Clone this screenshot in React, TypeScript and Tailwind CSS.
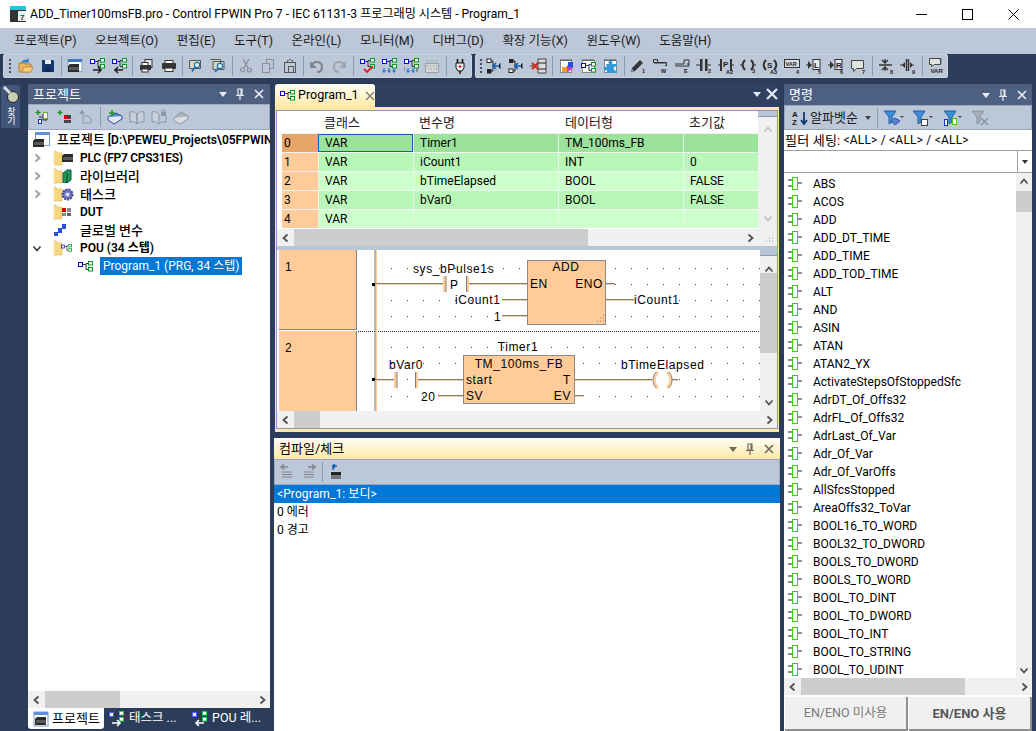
import React from "react";

const FONT = "[font-family:Roboto,'Noto_Sans_CJK_KR',sans-serif]";

type P = { children: React.ReactNode; w?: number; h?: number; vb?: string; className?: string };
const S = ({ children, w = 16, h = 16, vb, className = "" }: P) => (
  <svg width={w} height={h} viewBox={vb ?? `0 0 ${w} ${h}`} className={"shrink-0 " + className} fill="none">
    {children}
  </svg>
);

const Pou = ({ d = 0, dy = 0, c1 = "#0000e0", c2 = "#009a20" }: { d?: number; dy?: number; c1?: string; c2?: string }) => (
  <g transform={`translate(${d} ${dy})`}>
    <rect x="0.5" y="1.5" width="4" height="4" fill="#fff" stroke={c1} />
    <path d="M5 3.5h3M8 2.5v6h2M8 2.5h2" stroke="#333" />
    <rect x="10.5" y="0.5" width="4" height="3.5" fill="#fff" stroke={c2} />
    <rect x="10.5" y="6.5" width="4" height="3.5" fill="#fff" stroke={c2} />
  </g>
);
const Plc = ({ x = 0, y = 0 }: { x?: number; y?: number }) => (
  <g transform={`translate(${x} ${y})`}>
    <path d="M1 3l2-2h9v8H1z" fill="#2b2b2b" />
    <path d="M3 4v3M5 4v3M7 4v3M9 4v3M11 4v3" stroke="#888" />
  </g>
);
const Arrow = ({ dir, x = 2, y = 11, c = "#222" }: { dir: 1 | -1; x?: number; y?: number; c?: string }) => (
  <path
    d={dir > 0 ? `M${x} ${y}h8M${x + 5} ${y - 3}l3 3-3 3` : `M${x + 9} ${y}h-8M${x + 4} ${y - 3}l-3 3 3 3`}
    stroke={c}
    strokeWidth="1.6"
  />
);
const T = ({ x, y, s, c = "#222", z = 5.5 }: { x: number; y: number; s: string; c?: string; z?: number }) => (
  <text x={x} y={y} fontSize={z} fontWeight={700} fontFamily="Liberation Sans" fill={c}>
    {s}
  </text>
);
const Folder = () => (
  <S w={10} h={16}>
    <path d="M1 1h2l1 2h5v12H1z" fill="#f7d77f" stroke="#e0b850" strokeWidth="0.6" />
    <path d="M1 1v14" stroke="#fff3c4" />
  </S>
);
const FbIcon = () => (
  <S>
    <rect x="5.5" y="1.5" width="5" height="12" fill="#fff" stroke="#3ecb10" />
    <path d="M1 4h4M1 10h4M11 7h4" stroke="#222" />
  </S>
);

const I: Record<string, React.ReactNode> = {
  open: <S><path d="M1 5h5l1 1h6v8H1z" fill="#e9b45d" stroke="#b87f2a" /><path d="M4 14l2-5h9l-2 5z" fill="#f8cf7d" stroke="#c4913f" /><path d="M4 5c1-3 4-3 6-2M10 0.5v3.5H6.5" stroke="#2a7fc0" strokeWidth="1.4" /></S>,
  save: <S><path d="M2 2h11l1 1v11H2z" fill="#12396f" /><rect x="5" y="2" width="6" height="4" fill="#e8edf5" /><rect x="5" y="9" width="6" height="5" fill="#0d2a55" /></S>,
  win: <S><rect x="1" y="1.5" width="14" height="12" fill="#fff" stroke="#8aa0c0" /><rect x="1" y="1" width="14" height="3" fill="#3f78c8" /><Plc x={0} y={5} /></S>,
  pouR: <S><Pou d={1} /><Arrow dir={1} x={4} y={12} /></S>,
  pouL: <S><Pou d={1} /><Arrow dir={-1} x={3} y={12} /></S>,
  print2: <S><rect x="6" y="1.5" width="7" height="8" fill="#e4e4e4" stroke="#333" /><rect x="1" y="7" width="11" height="5" fill="#333" /><rect x="3" y="4.5" width="6" height="3" fill="#fff" stroke="#333" /><rect x="3" y="11" width="6" height="3" fill="#fff" stroke="#333" /></S>,
  print: <S><rect x="4" y="2.5" width="8" height="3" fill="#fff" stroke="#333" /><rect x="1" y="5" width="14" height="6" rx="1" fill="#333" /><rect x="4" y="10" width="8" height="3.5" fill="#fff" stroke="#333" /></S>,
  find: <S><path d="M1.5 2.5h11v8h-6l-2 3v-3h-3z" fill="#d3d7c5" stroke="#555" /><circle cx="9" cy="7" r="2.6" fill="#dff" stroke="#1c70b0" strokeWidth="1.2" /><path d="M7 9l-3 4" stroke="#1c70b0" strokeWidth="1.4" /></S>,
  find2: <S><path d="M0.5 1.5h10v7h-2M3 3.5h11v8H8l-2 2v-2H3z" fill="#d3d7c5" stroke="#555" /><circle cx="10" cy="8" r="2.6" fill="#dff" stroke="#1c70b0" strokeWidth="1.2" /><path d="M8 10l-3 4" stroke="#1c70b0" strokeWidth="1.4" /></S>,
  cut: <S><path d="M5 1l5 9M11 1l-5 9" stroke="#8a8f98" strokeWidth="1.3" /><circle cx="4.5" cy="12" r="2" stroke="#8a8f98" strokeWidth="1.2" /><circle cx="11.5" cy="12" r="2" stroke="#8a8f98" strokeWidth="1.2" /></S>,
  copy: <S><rect x="6.5" y="1.5" width="7" height="9" stroke="#8a8f98" /><rect x="2.5" y="5.5" width="7" height="9" fill="#bcc7d8" stroke="#8a8f98" /></S>,
  paste: <S><rect x="2.5" y="4.5" width="11" height="10" stroke="#555" /><path d="M5.5 4.5v-2h1l1-1h1l1 1h1v2z" fill="#bcc7d8" stroke="#555" /><rect x="6.5" y="8.5" width="5" height="6" fill="#bcc7d8" stroke="#555" /></S>,
  undo: <S><path d="M3 8c1-6 10-5 10 1 0 3-2 5-5 5" stroke="#808690" strokeWidth="2" /><path d="M1 3v7h7z" fill="#808690" /></S>,
  redo: <S><path d="M13 8C12 2 3 3 3 9c0 3 2 5 5 5" stroke="#a0a6b0" strokeWidth="2" /><path d="M15 3v7H8z" fill="#a0a6b0" /></S>,
  pouChk: <S><Pou d={1} /><path d="M5 11l3 3 6-6" stroke="#d82020" strokeWidth="1.8" /></S>,
  pouDn: <S><Pou d={1} /><path d="M3 10v4M1.5 12.5L3 14.5l1.5-2M8 10v4M6.5 12.5L8 14.5l1.5-2M13 10v4M11.5 12.5l1.5 2 1.5-2" stroke="#1060c0" /></S>,
  pouDots: <S><Pou d={1} /><path d="M5 10v4M3.5 12.5L5 14.5l1.5-2M10 10v4M8.5 12.5l1.5 2 1.5-2" stroke="#1060c0" /><path d="M1 10h1M1 12h1M13 11h2M13 13h2" stroke="#555" /></S>,
  grayDots: <S><rect x="1.5" y="5.5" width="13" height="9" fill="#d4d8dc" stroke="#98a0a8" /><path d="M3 3h1M6 3h1M9 3h1M12 3h1M3 8h1M6 8h1M9 8h1M12 8h1M4 11h1M7 11h1M10 11h1M12 11h1" stroke="#777" /></S>,
  plug: <S><path d="M5.5 1v4M10.5 1v4" stroke="#111" strokeWidth="1.6" /><path d="M4 5h8v5l-2 3H6l-2-3z" fill="#eee" stroke="#111" /><path d="M8 13v3" stroke="#111" strokeWidth="1.4" /><path d="M6.5 8.5h3M8 7v3" stroke="#d02020" strokeWidth="1.2" /></S>,
  inL: <S><rect x="1" y="1" width="4" height="3.5" fill="#fff" stroke="#222" /><rect x="1" y="11" width="4.5" height="4.5" fill="#222" /><path d="M5 3h2v10H5" stroke="#222" /><Arrow dir={-1} x={6} y={8} c="#1060b0" /><path d="M15 6h-1.5v4H15" stroke="#222" /></S>,
  inL2: <S><rect x="1" y="1" width="4.5" height="4" fill="#222" /><rect x="1" y="11" width="4" height="3.5" fill="#fff" stroke="#222" /><path d="M5 3h2v10H5" stroke="#222" /><Arrow dir={-1} x={6} y={8} c="#1060b0" /><path d="M15 6h-1.5v4H15" stroke="#222" /></S>,
  xBox: <S w={18}><path d="M1 8h4M9 1h8v14H9z" fill="#ddd" stroke="#444" /><path d="M9 5h8M9 11h8" stroke="#222" /><path d="M3 5l6 6M9 5l-6 6" stroke="#d02a1a" strokeWidth="2" /></S>,
  note: <S><rect x="2.5" y="2.5" width="11" height="12" fill="#fff" stroke="#888" /><path d="M3 1v2M5 1v2M7 1v2M9 1v2M11 1v2M13 1v2" stroke="#555" /><path d="M4 13l6-6 5-3v6l-5 4z" fill="#c03ad0" /><path d="M4 9h5v5H4z" fill="#f0a020" /><path d="M10 4h5v5h-5z" fill="#2050e0" /></S>,
  notePou: <S><rect x="2.5" y="2.5" width="12" height="12" fill="#fff" stroke="#888" /><path d="M3 1v2M5 1v2M7 1v2M9 1v2M11 1v2M13 1v2" stroke="#555" /><Pou d={1} dy={4} /></S>,
  puzzle: <S><rect x="2.5" y="2.5" width="12" height="12" fill="#fff" stroke="#888" /><path d="M3 1v2M5 1v2M7 1v2M9 1v2M11 1v2M13 1v2" stroke="#555" /><path d="M4 6h3a2 2 0 1 1 3 0h5v3a2 2 0 1 0 0 3v3H5v-3a2 2 0 1 1 0-3z" fill="#3398d8" /></S>,
  pencil: <S><path d="M1 14l1-4 8-8 3 3-8 8z" fill="#333" /><path d="M1 14l1-3 2 2z" fill="#999" /><T x={12} y={15} s="1" /></S>,
  wireW: <S><path d="M1.5 1.5h4v3h9v3h-1.5M1.5 1.5v3h4" stroke="#333" /><path d="M2 5h12" stroke="#333" /><T x={9} y={15} s="W" /></S>,
  wireE: <S><path d="M1 6h9V2h5v4h-2" stroke="#333" /><path d="M1 8h14v-2" stroke="#333" /><T x={10} y={15} s="E" /></S>,
  c2: <S><path d="M0 7h4M11 7h4" stroke="#333" /><rect x="4" y="1" width="2.5" height="12" fill="#333" /><rect x="9" y="1" width="2.5" height="12" fill="#333" /><T x={12} y={15} s="2" /></S>,
  cP: <S><path d="M0 7h3M13 7h3" stroke="#333" /><rect x="2" y="1" width="2" height="12" fill="#333" /><rect x="12" y="1" width="2" height="12" fill="#333" /><T x={5} y={9} s="P" z={8} /><T x={8} y={16} s="A2" /></S>,
  co3: <S><path d="M5 2C2 5 2 9 5 12M11 2c3 3 3 7 0 10" stroke="#333" strokeWidth="2.2" /><path d="M0 7h2M14 7h2" stroke="#333" /><T x={12} y={15} s="3" /></S>,
  coS: <S><path d="M4 2C1 5 1 9 4 12M12 2c3 3 3 7 0 10" stroke="#333" strokeWidth="2.2" /><T x={5} y={10} s="S" z={8} /><T x={8} y={16} s="A3" /></S>,
  var: <S><rect x="0.5" y="1.5" width="15" height="8" fill="#d8dde5" stroke="#333" /><T x={1.5} y={8} s="VAR" z={5.5} /><T x={12} y={15.5} s="4" /></S>,
  L: <S><path d="M0 7h3" stroke="#333" /><path d="M2 3l4 4-4 4z" fill="#333" /><rect x="7" y="1.5" width="7" height="10" fill="#e5e8ed" stroke="#333" /><T x={8} y={10} s="L" z={8} /><T x={12} y={16} s="5" /></S>,
  R: <S><path d="M0 7h3" stroke="#333" /><path d="M2 3l4 4-4 4z" fill="#333" /><rect x="7" y="1.5" width="7" height="10" fill="#e5e8ed" stroke="#333" /><T x={8} y={10} s="R" z={8} /><T x={12} y={16} s="6" /></S>,
  cmt: <S><path d="M1.5 2.5h12v8h-7l-3 3v-3h-2z" fill="#dfe4dc" stroke="#444" /><T x={12} y={15.5} s="7" /></S>,
  n8: <S><path d="M1 7h13" stroke="#333" strokeWidth="1.5" /><path d="M7 1v3M4 2l3 3 3-3M4 12l3-3 3 3M7 10v3" stroke="#333" strokeWidth="1.4" /><T x={12} y={15.5} s="8" /></S>,
  n9: <S><path d="M0 7h3M13 7h1" stroke="#333" /><path d="M2 7l3-3v6zM13 7l-3-3v6z" fill="#333" /><path d="M6.5 1v12M8.5 1v12" stroke="#333" strokeWidth="1.4" /><T x={12} y={15.5} s="9" /></S>,
  cmtVar: <S><path d="M1.5 0.5h11v6h-6l-3 2v-2h-2z" fill="#dfe4dc" stroke="#444" /><path d="M11 1h4M13 3h2M13 5h2" stroke="#777" strokeDasharray="1 1" /><T x={2.5} y={15} s="VAR" z={6} /></S>,
};

const Grip = () => (
  <div className="flex flex-col gap-[2px] w-[2px] mx-[1px]">
    {[0, 1, 2, 3].map((i) => (
      <div key={i} className="w-[2px] h-[2px] bg-[#3f4f6a]" />
    ))}
  </div>
);
const Sep = () => (
  <div className="w-[6px] h-[20px] flex justify-center">
    <div className="w-[1px] h-full bg-[#8d99ad]" />
  </div>
);
const Slot = ({ children }: { children: React.ReactNode }) => (
  <div className="w-[22px] h-[20px] flex items-center justify-center">{children}</div>
);
const Bar = ({ items }: { items: string[] }) => (
  <>
    {items.map((k, i) => (k === "|" ? <Sep key={i} /> : <Slot key={i}>{I[k]}</Slot>))}
  </>
);

const Chev = ({ dir, c = "#505050" }: { dir: "l" | "r" | "u" | "d"; c?: string }) => {
  const d = { l: "M6.5 1.5L2.5 5l4 3.5", r: "M3.5 1.5L7.5 5l-4 3.5", u: "M1.5 6.5L5 2.5l3.5 4", d: "M1.5 3.5L5 7.5l3.5-4" }[dir];
  return (
    <S w={10} h={10}>
      <path d={d} stroke={c} strokeWidth="1.8" />
    </S>
  );
};

const HBar = ({ thumb, className = "" }: { thumb: string; className?: string }) => (
  <div className={"h-[17px] bg-[#f0f0f0] flex items-center shrink-0 " + className}>
    <div className="w-[17px] flex justify-center"><Chev dir="l" /></div>
    <div className="flex-1 h-full">
      <div className={"h-full bg-[#cdcdcd] " + thumb} />
    </div>
    <div className="w-[17px] flex justify-center"><Chev dir="r" /></div>
  </div>
);

const TitleIcons = ({ c = "#e6ebf2" }: { c?: string }) => (
  <div className="ml-auto flex items-center gap-[7px]">
    <S w={10} h={10}><path d="M1 3h8L5 8z" fill={c} /></S>
    <S w={10} h={12}><path d="M3 1h4v6H3zM1 7.5h8M5 8v4" stroke={c} strokeWidth="1.2" /><path d="M5.5 1h1.5v6H5.5z" fill={c} /></S>
    <S w={12} h={12} className="ml-[1px]"><path d="M2 2l8 8M10 2l-8 8" stroke={c} strokeWidth="1.7" /></S>
  </div>
);

const menu = ["프로젝트(P)", "오브젝트(O)", "편집(E)", "도구(T)", "온라인(L)", "모니터(M)", "디버그(D)", "확장 기능(X)", "윈도우(W)", "도움말(H)"];

const Row = ({ chev, icon, label, cls = "" }: { chev?: "r" | "d"; icon: React.ReactNode; label: string; cls?: string }) => (
  <div className="h-[18px] flex items-center font-semibold text-black whitespace-nowrap">
    <div className="w-[25px] pl-[4px] flex justify-start">
      {chev && <Chev dir={chev} c={chev === "r" ? "#9a9a9a" : "#444"} />}
    </div>
    <div className="w-[27px] flex items-center">{icon}</div>
    <span className={cls}>{label}</span>
  </div>
);

const overlayFolder = (child: React.ReactNode) => (
  <div className="flex items-center">
    <Folder />
    <div className="-ml-[2px] flex items-center">{child}</div>
  </div>
);

const vars = [
  ["0", "VAR", "Timer1", "TM_100ms_FB", ""],
  ["1", "VAR", "iCount1", "INT", "0"],
  ["2", "VAR", "bTimeElapsed", "BOOL", "FALSE"],
  ["3", "VAR", "bVar0", "BOOL", "FALSE"],
  ["4", "VAR", "", "", ""],
];
const rowBg = ["bg-[#9be29b]", "bg-[#b9f7b9]", "bg-[#ccffcc]", "bg-[#b9f7b9]", "bg-[#ccffcc]"];
const cmds = "ABS ACOS ADD ADD_DT_TIME ADD_TIME ADD_TOD_TIME ALT AND ASIN ATAN ATAN2_YX ActivateStepsOfStoppedSfc AdrDT_Of_Offs32 AdrFL_Of_Offs32 AdrLast_Of_Var Adr_Of_Var Adr_Of_VarOffs AllSfcsStopped AreaOffs32_ToVar BOOL16_TO_WORD BOOL32_TO_DWORD BOOLS_TO_DWORD BOOLS_TO_WORD BOOL_TO_DINT BOOL_TO_DWORD BOOL_TO_INT BOOL_TO_STRING BOOL_TO_UDINT".split(" ");

const Lbl = ({ x, y, s, right, center }: { x: number; y: number; s: string; right?: boolean; center?: boolean }) => (
  <div
    className="absolute text-[12px] leading-none text-black whitespace-nowrap tracking-[0.6px] [font-family:'Liberation_Sans',sans-serif]"
    style={{
      left: x - 277,
      top: y - 250,
      transform: `translate(${right ? "-100%" : center ? "-50%" : "0"}, -50%)`,
    }}
  >
    {s}
  </div>
);

const Wire = ({ d }: { d: string }) => (
  <>
    <path d={d} stroke="#ffcc99" strokeWidth="1" transform="translate(0 0.5)" />
    <path d={d} stroke="#7d7d7d" strokeWidth="1" transform="translate(0 -0.5)" />
  </>
);
const Contact = ({ x1, x2, y }: { x1: number; x2: number; y: number }) => (
  <>
    <rect x={x1} y={y - 8} width="3" height="16" fill="#ffcc99" />
    <rect x={x1 + 2.5} y={y - 8} width="1" height="16" fill="#7d7d7d" />
    <rect x={x2} y={y - 8} width="3" height="16" fill="#ffcc99" />
    <rect x={x2} y={y - 8} width="1" height="16" fill="#7d7d7d" />
  </>
);

function Ladder() {
  const xs: number[] = [];
  for (let x = 391; x < 760; x += 16) xs.push(x);
  const ys = [268, 284, 300, 316, 347, 363, 379, 396];
  return (
    <div className="relative h-[161px] bg-white overflow-hidden">
      <div className="flex flex-col h-full pl-[2px]">
        <div className="h-[80px] flex">
          <div className="w-[78px] h-[80px] bg-[#ffcc99] border-r border-b border-[#808080] pl-[6px] pt-[11px] text-[12px] text-black [font-family:'Liberation_Sans',sans-serif]">1</div>
        </div>
        <div className="h-[81px] flex">
          <div className="w-[78px] h-[81px] mt-[1px] bg-[#ffcc99] border-r border-[#808080] pl-[6px] pt-[11px] text-[12px] text-black [font-family:'Liberation_Sans',sans-serif]">2</div>
        </div>
      </div>
      <svg className="absolute left-0 top-0" width="483" height="161" viewBox="277 250 483 161" fill="none">
        {ys.flatMap((y) => xs.map((x) => <rect key={x + "-" + y} x={x} y={y} width="1" height="1" fill="#444" />))}
        <path d="M358 331.5H760" stroke="#222" strokeDasharray="1 1" />
        <rect x="375.5" y="250" width="1.5" height="161" fill="#ffcc99" />
        <rect x="374.5" y="250" width="1" height="161" fill="#7d7d7d" />
        <rect x="372" y="283" width="3" height="3" fill="#000" />
        <rect x="372" y="378" width="3" height="3" fill="#000" />
        <Wire d="M375 284H445M467 284H527M502 300H527M502 316H527M606 284H615M606 300H634" />
        <Contact x1={443} x2={466} y={284} />
        <rect x="527.5" y="260.5" width="78" height="64" fill="#ffcc99" stroke="#8a8a8a" />
        <path d="M600 321h1M597 321h1M603 321h1M600 318h1M603 318h1M603 315h1" stroke="#a08060" />
        <Wire d="M375 380H395M418 380H463M438 396H463M575 380H652M672 380H678M575 396H584" />
        <Contact x1={394} x2={415} y={380} />
        <rect x="463.5" y="355.5" width="111" height="48" fill="#ffcc99" stroke="#8a8a8a" />
        <rect x="652" y="371" width="20" height="18" fill="#fff" />
        <path d="M658 372c-5 4-5 12 0 16M667 372c5 4 5 12 0 16" stroke="#ffcc99" strokeWidth="3" />
        <path d="M656 372c-4 4-4 12 0 16M669 372c4 4 4 12 0 16" stroke="#8a8a8a" />
      </svg>
      <Lbl x={413} y={269} s="sys_bPulse1s" />
      <Lbl x={450} y={285} s="P" />
      <Lbl x={566} y={267} s="ADD" center />
      <Lbl x={530} y={284} s="EN" />
      <Lbl x={603} y={284} s="ENO" right />
      <Lbl x={455} y={300} s="iCount1" />
      <Lbl x={494} y={317} s="1" />
      <Lbl x={634} y={300} s="iCount1" />
      <Lbl x={518} y={347} s="Timer1" center />
      <Lbl x={519} y={364} s="TM_100ms_FB" center />
      <Lbl x={389} y={365} s="bVar0" />
      <Lbl x={621} y={365} s="bTimeElapsed" />
      <Lbl x={466} y={380} s="start" />
      <Lbl x={571} y={380} s="T" right />
      <Lbl x={466} y={396} s="SV" />
      <Lbl x={571} y={396} s="EV" right />
      <Lbl x={421} y={397} s="20" />
    </div>
  );
}

export default function App() {
  return (
    <div className={"w-[1036px] h-[731px] overflow-hidden flex flex-col bg-[#2c3d5b] text-[12px] leading-none " + FONT}>
      {/* title */}
      <div className="h-[28px] shrink-0 bg-white flex items-center pl-[9px] text-black text-[12.1px]">
        <S w={18} h={18} className="mr-[3px]">
          <rect x="1" y="1" width="16" height="4" fill="#25c4d8" />
          <rect x="1" y="5" width="16" height="12" fill="#333" />
          <rect x="9" y="6" width="8" height="10" fill="#eee" />
          <T x={11} y={14.5} s="7" c="#333" z={8} />
        </S>
        <span>ADD_Timer100msFB.pro - Control FPWIN Pro 7 - IEC 61131-3 프로그래밍 시스템 - Program_1</span>
        <div className="ml-auto flex items-center">
          <div className="w-[46px] flex justify-center"><S w={11} h={11}><path d="M0 5.5h11" stroke="#000" /></S></div>
          <div className="w-[46px] flex justify-center"><S w={11} h={11}><rect x="0.5" y="0.5" width="10" height="10" stroke="#000" /></S></div>
          <div className="w-[46px] flex justify-center"><S w={11} h={11}><path d="M0.5 0.5l10 10M10.5 0.5l-10 10" stroke="#000" /></S></div>
        </div>
      </div>
      {/* menu */}
      <div className="h-[26px] shrink-0 bg-[#bcc7d8] flex items-center pl-[14px] gap-[18.5px] text-[#1b1b1b] text-[12.5px]">
        {menu.map((m) => <span key={m} className="whitespace-nowrap">{m}</span>)}
      </div>
      {/* toolbars */}
      <div className="h-[24px] shrink-0 flex pl-[3px] gap-[3px]">
        <div className="w-[469px] h-[24px] bg-[#bcc7d8] rounded-[2px] border border-[#cbd4e1] flex items-center pl-[4px]">
          <Grip />
          <div className="w-[3px]" />
          <Bar items={["open", "save", "|", "win", "pouR", "pouL", "|", "print2", "print", "|", "find", "find2", "|", "cut", "copy", "paste", "|", "undo", "redo", "|", "pouChk", "pouDn", "pouDots", "grayDots", "|", "plug"]} />
        </div>
        <div className="w-[473px] h-[24px] bg-[#bcc7d8] rounded-[2px] border border-[#cbd4e1] flex items-center pl-[3px]">
          <Grip />
          <Bar items={["inL", "inL2", "xBox", "|", "note", "notePou", "puzzle", "|", "pencil", "wireW", "wireE", "c2", "cP", "co3", "coS", "var", "L", "R", "cmt", "|", "n8", "n9", "|", "cmtVar"]} />
        </div>
      </div>

      {/* body */}
      <div className="flex-1 flex pt-[6px] min-h-0">
        {/* left strip */}
        <div className="w-[28px] shrink-0 pl-[1px] pt-[1px]">
          <div className="w-[19px] h-[43px] bg-[#42557a] rounded-[2px] flex flex-col items-center pt-[1px]">
            <S w={18} h={18}>
              <circle cx="11" cy="11" r="5.5" fill="#c8cdb4" stroke="#222" />
              <path d="M2 1l6 6" stroke="#ddd" strokeWidth="3" />
            </S>
            <span className="text-[9px] text-white [writing-mode:vertical-rl] mt-[3px]">찾기</span>
          </div>
        </div>

        {/* project panel */}
        <div className="w-[242px] shrink-0 flex flex-col">
          <div className="h-[20px] shrink-0 bg-[#4d6082] rounded-t-[2px] flex items-center px-[5px] text-white">
            <span className="text-[13px]">프로젝트</span>
            <TitleIcons />
          </div>
          <div className="h-[26px] shrink-0 bg-[#bcc7d8] border border-[#9aa8bd] flex items-center pl-[3px]">
            <Slot><S><path d="M3 1v5M0.5 3.5h5" stroke="#1a9a20" strokeWidth="1.6" /><path d="M4 8h3M8 5h4v6H8z" stroke="#222" /><rect x="8.5" y="3.5" width="4" height="6" fill="#fff" stroke="#3ecb10" /><rect x="3.5" y="10.5" width="3" height="4" fill="#fff" stroke="#1030d0" /></S></Slot>
            <Slot><S><path d="M3 1v5M0.5 3.5h5" stroke="#1a9a20" strokeWidth="1.6" /><rect x="7" y="6" width="4" height="4" fill="#c00" /><rect x="11" y="6" width="3" height="4" fill="#444" /><rect x="7" y="11" width="4" height="3" fill="#444" /><rect x="11" y="11" width="3" height="3" fill="#444" /></S></Slot>
            <Slot><S><path d="M3 1v5M0.5 3.5h5" stroke="#8a95a5" strokeWidth="1.6" /><path d="M4 7h5l3 3v4H4z" stroke="#8a95a5" /></S></Slot>
            <div className="w-[3px] h-[20px] border-r border-[#8d99ad] mr-[3px]" />
            <Slot><S><path d="M1 8l8-4 6 3-8 5z" fill="#5a84d8" stroke="#2a50a0" /><path d="M1 8v3l6 4 8-5V7" stroke="#2a50a0" fill="#dfe7f5" /><path d="M5 1v6M2 4h6" stroke="#1a9a20" strokeWidth="1.6" /></S></Slot>
            <Slot><S><path d="M1 3c3-1 5 0 7 2v10c-2-2-4-3-7-2zM15 3c-3-1-5 0-7 2v10c2-2 4-3 7-2z" fill="#c8d0da" stroke="#8a95a5" /></S></Slot>
            <Slot><S><path d="M1 3c3-1 5 0 7 2v10c-2-2-4-3-7-2zM15 7v6c-3-1-5 0-7 2" fill="#c8d0da" stroke="#8a95a5" /><rect x="10" y="3" width="5" height="4" fill="#8a95a5" /><path d="M11 3V1h3v2" stroke="#8a95a5" /></S></Slot>
            <Slot><S><path d="M1 9l7-6 7 4-8 6z" fill="#a8b0ba" stroke="#8a95a5" /><path d="M1 9v3l6 3 8-5V7" fill="#d8dde3" stroke="#8a95a5" /></S></Slot>
          </div>
          <div className="flex-1 min-h-0 bg-white overflow-hidden">
            <div className="h-[19px] flex items-center font-semibold text-black whitespace-nowrap pl-[4px]">
              <S w={18} h={16} className="mr-[7px]"><rect x="3.5" y="0.5" width="14" height="13" fill="#fff" stroke="#7d98c4" /><rect x="3" y="0" width="15" height="3" fill="#5f8fd8" /><Plc x={0} y={6} /></S>
              <span><span className="text-[13px] font-medium">프로젝트</span> [D:\PEWEU_Projects\05FPWIN</span>
            </div>
            <Row chev="r" icon={overlayFolder(<S w={14} h={11}><Plc /></S>)} label="PLC (FP7 CPS31ES)" cls="tracking-[-0.3px]" />
            <Row chev="r" icon={overlayFolder(<S w={12} h={14}><path d="M2 4l4-3h4v10l-4 3H2z" fill="#1c9c50" stroke="#1a5060" /><path d="M6 4v10" stroke="#234" /></S>)} label="라이브러리" cls="text-[13px] font-medium" />
            <Row chev="r" icon={overlayFolder(<S w={13} h={13}><circle cx="6.5" cy="6.5" r="5" fill="#6a78c8" stroke="#4a4a90" strokeWidth="2" strokeDasharray="2 1" /><circle cx="6.5" cy="6.5" r="2" fill="#dde" /></S>)} label="태스크" cls="text-[13px] font-medium" />
            <Row icon={overlayFolder(<S w={11} h={10}><rect x="1" y="1" width="4" height="4" fill="#c00" /><rect x="6" y="1" width="4" height="4" fill="#888" /><rect x="1" y="6" width="4" height="3" fill="#888" /><rect x="6" y="6" width="4" height="3" fill="#666" /></S>)} label="DUT" />
            <Row icon={<S w={14} h={14}><path d="M1 9h4V5h4V1h4v5h-4v4H5v3H1z" fill="#2a50d8" /></S>} label="글로벌 변수" cls="text-[13px] font-medium" />
            <Row chev="d" icon={overlayFolder(<S w={11} h={10} vb="0 0 15 11"><Pou /></S>)} label="POU (34 스텝)" />
            <div className="h-[18px] flex items-center pl-[50px]">
              <S w={15} h={11}><Pou /></S>
              <span className="ml-[7px] h-[18px] px-[3px] bg-[#0078d7] text-white flex items-center whitespace-nowrap">Program_1 (PRG, 34 스텝)</span>
            </div>
          </div>
          <HBar thumb="w-[75px]" />
          <div className="h-[23px] shrink-0 flex items-start text-white">
            <div className="w-[76px] h-[21px] bg-white rounded-b-[3px] flex items-center pl-[5px] text-black gap-[3px]">
              <S><rect x="1" y="1" width="14" height="14" fill="#fff" stroke="#7d98c4" /><rect x="1" y="1" width="14" height="3" fill="#5f8fd8" /><Plc x={1} y={5} /></S>
              <span className="text-[13px]">프로젝트</span>
            </div>
            <div className="w-[88px] h-[21px] flex items-center pl-[5px] gap-[4px]">
              <S><Pou d={0} c1="#4060ff" c2="#30d050" /><Arrow dir={1} x={3} y={12} c="#fff" /></S>
              <span className="text-[12.5px]">태스크 ...</span>
            </div>
            <div className="h-[21px] flex items-center gap-[4px]">
              <S><Pou d={0} c1="#4060ff" c2="#30d050" /><Arrow dir={-1} x={3} y={12} c="#fff" /></S>
              <span className="text-[12.5px]">POU 레...</span>
            </div>
          </div>
        </div>

        {/* center */}
        <div className="w-[506px] ml-[4px] shrink-0 flex flex-col">
          <div className="h-[23px] shrink-0 flex items-start pl-[1px] pr-[2px] bg-[conic-gradient(#2c3d5b_25%,#324463_0_50%,#2c3d5b_0_75%,#324463_0)] bg-[length:2px_2px]">
            <div className="w-[100px] h-[23px] rounded-t-[3px] bg-gradient-to-b from-[#fffdf5] to-[#ffe8a6] flex items-center pl-[5px] text-black">
              <S w={15} h={11} className="mr-[3px]"><Pou /></S>
              <span className="text-[12.5px]">Program_1</span>
              <S w={10} h={10} className="ml-[6px]"><path d="M1 1l8 8M9 1l-8 8" stroke="#777" strokeWidth="1.2" /></S>
            </div>
            <div className="ml-auto flex items-center mt-[4px] gap-[4px]">
              <S w={10} h={10}><path d="M1 3h8L5 8z" fill="#dfe6f0" /></S>
              <S w={12} h={12}><path d="M1 1l10 10M11 1L1 11" stroke="#dfe6f0" strokeWidth="2.4" /></S>
            </div>
          </div>
          {/* document frame */}
          <div className="h-[325px] shrink-0 ml-[1px] mr-[1px] bg-[#ffe8a6] px-[1px] pt-[3px] pb-[3px]">
            <div className="h-full flex flex-col border border-[#8c98ab] bg-[#b9c6d8]">
              {/* table */}
              <div className="h-[135px] shrink-0 flex flex-col bg-white">
                <div className="h-[118px] flex text-black">
                  <div className="w-[481px] shrink-0 pl-[5px]">
                    <div className="h-[22px] flex items-center text-[#222] text-[13px]">
                      <div className="w-[36px]" />
                      <div className="w-[95px] pl-[6px]">클래스</div>
                      <div className="w-[145px] pl-[6px]">변수명</div>
                      <div className="w-[125px] pl-[7px]">데이터형</div>
                      <div className="w-[75px] pl-[6px]">초기값</div>
                    </div>
                    {vars.map((r, i) => (
                      <div key={i} className="h-[19px] flex border-t border-[#f2f2f2]">
                        <div className={"w-[36px] flex items-center pl-[2px] " + (i === 0 ? "bg-[#e6a566]" : "bg-[#ffcc99]")}>{r[0]}</div>
                        <div className={"w-[95px] flex items-center pl-[6px] " + rowBg[i] + (i === 0 ? " border border-[#1060b0]" : " border-l border-[#e8f5e8]")}>{r[1]}</div>
                        <div className={"w-[145px] flex items-center pl-[6px] border-l border-[#e8f5e8] " + rowBg[i]}>{r[2]}</div>
                        <div className={"w-[125px] flex items-center pl-[6px] border-l border-[#e8f5e8] " + rowBg[i]}>{r[3]}</div>
                        <div className={"w-[75px] flex items-center pl-[6px] border-l border-[#e8f5e8] " + rowBg[i]}>{r[4]}</div>
                      </div>
                    ))}
                  </div>
                  <div className="flex-1 bg-[#f0f0f0] flex flex-col items-center">
                    <div className="w-full h-[6px] bg-[#b9c6d8] border-b border-[#8c98ab]" />
                    <div className="mt-[8px]"><Chev dir="u" c="#c0c0c0" /></div>
                    <div className="mt-auto mb-[6px]"><Chev dir="d" c="#c0c0c0" /></div>
                  </div>
                </div>
                <div className="flex h-[17px] bg-[#f0f0f0]">
                  <div className="w-[481px] h-[17px]"><HBar thumb="w-[294px]" /></div>
                  <div className="flex-1 flex items-end justify-end p-[3px]">
                    <S w={8} h={8}><path d="M6 0h1M3 3h1M6 3h1M0 6h1M3 6h1M6 6h1" stroke="#999" /></S>
                  </div>
                </div>
              </div>
              <div className="h-[4px] shrink-0 bg-[#b9c6d8]" />
              {/* ladder */}
              <div className="flex-1 flex flex-col min-h-0 bg-white">
                <div className="flex h-[161px] shrink-0">
                  <div className="w-[483px] shrink-0"><Ladder /></div>
                  <div className="flex-1 bg-[#f0f0f0] flex flex-col items-center">
                    <div className="w-full h-[6px] bg-[#b9c6d8] border-b border-[#8c98ab]" />
                    <div className="mt-[9px]"><Chev dir="u" /></div>
                    <div className="w-full h-[80px] mt-[-2px] bg-[#cdcdcd]" />
                    <div className="mt-auto mb-[4px]"><Chev dir="d" /></div>
                  </div>
                </div>
                <HBar thumb="w-[26px]" />
              </div>
            </div>
          </div>
          <div className="h-[6px] shrink-0" />
          {/* compile */}
          <div className="flex-1 min-h-0 flex flex-col bg-white">
            <div className="h-[21px] shrink-0 rounded-t-[3px] bg-gradient-to-b from-[#fffdf5] to-[#ffe8a6] flex items-center pl-[5px] pr-[5px] text-black">
              <span className="text-[13px]">컴파일/체크</span>
              <TitleIcons c="#6f6a5c" />
            </div>
            <div className="h-[26px] shrink-0 bg-[#bcc7d8] border border-[#9aa8bd] flex items-center pl-[1px]">
              <Slot><S><path d="M2 3h7M5 0.5L2 3l3 2.5" stroke="#808690" strokeWidth="1.6" /><path d="M3 8h10M3 10.5h10M3 13h10" stroke="#808690" /></S></Slot>
              <Slot><S><path d="M7 3h7M11 0.5L14 3l-3 2.5" stroke="#808690" strokeWidth="1.6" /><path d="M3 8h10M3 10.5h10M3 13h10" stroke="#808690" /></S></Slot>
              <div className="w-[1px] h-[20px] bg-[#8d99ad] mx-[2px]" />
              <Slot><S><path d="M3 12h10M3 14h10" stroke="#222" /><rect x="3" y="8" width="10" height="3" fill="#222" /><path d="M9 2H5M7 0L4.5 2 7 4M5 2v4" stroke="#1060b0" strokeWidth="1.4" /></S></Slot>
            </div>
            <div className="h-[18px] shrink-0 bg-[#0078d7] text-white flex items-center pl-[3px] tracking-[0.1px]">&lt;Program_1: 보디&gt;</div>
            <div className="h-[18px] flex items-center pl-[3px] text-black">0 에러</div>
            <div className="h-[18px] flex items-center pl-[3px] text-black">0 경고</div>
          </div>
        </div>

        {/* command */}
        <div className="w-[248px] ml-[4px] shrink-0 flex flex-col">
          <div className="h-[21px] shrink-0 bg-[#4d6082] rounded-t-[2px] flex items-center pl-[5px] pr-[4px] text-white">
            <span className="text-[13px]">명령</span>
            <TitleIcons />
          </div>
          <div className="h-[25px] shrink-0 bg-[#bcc7d8] border border-[#9aa8bd] flex items-center pl-[7px] text-[#1b1b1b]">
            <S w={16} h={16}><T x={0} y={7} s="A" c="#222" z={8} /><T x={0} y={15} s="Z" c="#222" z={8} /><path d="M12 2v11M9 10l3 4 3-4" stroke="#12396f" strokeWidth="1.8" /></S>
            <span className="ml-[2px] text-[13px] w-[48px] whitespace-nowrap">알파벳순</span>
            <S w={8} h={8} className="ml-[6px]"><path d="M1 2h6L4 6z" fill="#444" /></S>
            <div className="w-[1px] h-[20px] bg-[#8d99ad] ml-[5px] mr-[6px]" />
            <S w={20} h={16}><path d="M0 1h12L8 7v5l-3 2V7z" fill="#3f8fd8" stroke="#2060a0" /><path d="M7 11l4-3 5 3-5 4z" fill="#5a84d8" stroke="#2a50a0" /><path d="M16 6h4l-2 2z" fill="#444" /></S>
            <S w={20} h={16} className="ml-[9px]"><path d="M0 1h12L8 7v5l-3 2V7z" fill="#3f8fd8" stroke="#2060a0" /><rect x="8.5" y="9.5" width="6" height="6" fill="#fff" stroke="#444" /><path d="M16 6h4l-2 2z" fill="#444" /></S>
            <S w={20} h={16} className="ml-[9px]"><path d="M2 1h12L10 7v5l-3 2V7z" fill="#3f8fd8" stroke="#2060a0" /><rect x="2.5" y="9.5" width="3" height="6" fill="#fff" stroke="#1030d0" /><rect x="10.5" y="8.5" width="4" height="6" fill="#fff" stroke="#3ecb10" /><path d="M16 6h4l-2 2z" fill="#444" /></S>
            <S w={18} h={16} className="ml-[10px]"><path d="M0 1h12L8 7v5l-3 2V7z" fill="#a8b0ba" stroke="#8a95a5" /><path d="M9 8l7 7M16 8l-7 7" stroke="#8a95a5" strokeWidth="1.6" /></S>
          </div>
          <div className="h-[20px] shrink-0 bg-white text-black flex items-center pl-[1px] tracking-[0.2px] whitespace-nowrap"><span className="text-[13px] mr-[3px]">필터 세팅:</span> &lt;ALL&gt; / &lt;ALL&gt; / &lt;ALL&gt;</div>
          <div className="h-[23px] shrink-0 bg-white border-y border-[#a0a0a0] flex justify-end">
            <div className="w-[15px] border-l border-[#a0a0a0] flex items-center justify-center">
              <S w={8} h={8}><path d="M1 2h6L4 6z" fill="#333" /></S>
            </div>
          </div>
          <div className="flex-1 min-h-0 flex bg-white">
            <div className="flex-1 min-w-0 pl-[3px] pt-[2px] overflow-hidden">
              {cmds.map((c) => (
                <div key={c} className="h-[18px] flex items-center gap-[10px] text-black">
                  <FbIcon />
                  <span className="whitespace-nowrap">{c}</span>
                </div>
              ))}
            </div>
            <div className="w-[16px] shrink-0 bg-[#f0f0f0] flex flex-col items-center">
              <div className="h-[18px] flex items-center"><Chev dir="u" /></div>
              <div className="w-full h-[21px] bg-[#cdcdcd]" />
              <div className="mt-auto mb-[3px]"><Chev dir="d" /></div>
            </div>
          </div>
          <HBar thumb="w-[164px]" />
          <div className="h-[36px] shrink-0 bg-white pt-[2px] pl-[1px] flex gap-[1px]">
            <div className="w-[123px] h-[34px] bg-[#f0f0f0] border-r-2 border-b-2 border-[#8f8f8f] flex items-center justify-center text-[#7a7a7a] text-[12.5px]">EN/ENO 미사용</div>
            <div className="w-[123px] h-[34px] bg-[#f0f0f0] border-r-2 border-b-2 border-[#8f8f8f] flex items-center justify-center font-bold text-[#555] text-[13px]">EN/ENO 사용</div>
          </div>
        </div>
      </div>
    </div>
  );
}
